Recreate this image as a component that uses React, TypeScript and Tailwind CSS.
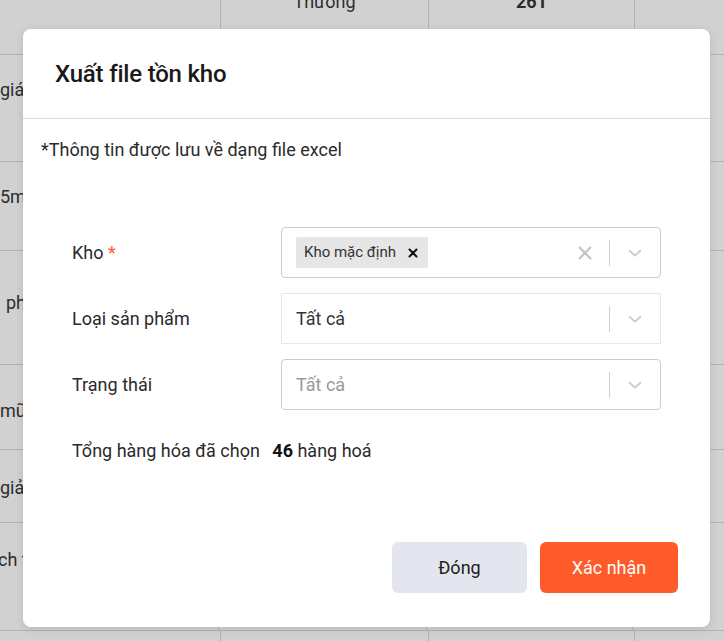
const rows = [
  { h: "h-[55px]", pt: "", a: "", b: "Thường", c: "261" },
  { h: "h-[107px]", pt: "pt-[23px]", a: "giá bán lẻ", b: "", c: "" },
  { h: "h-[89px]", pt: "pt-[23px]", a: "5ml", b: "", c: "" },
  { h: "h-[114px]", pt: "pt-[40px] pl-[6px]", a: "phẩm", b: "", c: "" },
  { h: "h-[85px]", pt: "pt-[34px]", a: "mũ bảo", b: "", c: "" },
  { h: "h-[73px]", pt: "pt-[26px]", a: "giảm giá", b: "", c: "" },
  { h: "h-[108px]", pt: "pt-[25px] -ml-[2px]", a: "ch tiết", b: "", c: "" },
  { h: "h-[60px]", pt: "", a: "", b: "", c: "" },
];

function Chevron() {
  return (
    <svg width="18" height="18" viewBox="0 0 20 20" className="text-[#cccccc]">
      <path
        d="M4 7.5 10 13 16 7.5"
        fill="none"
        stroke="currentColor"
        strokeWidth="2"
        strokeLinecap="round"
        strokeLinejoin="round"
      />
    </svg>
  );
}

function SelectBox({
  children,
  clear,
  className,
}: {
  children: React.ReactNode;
  clear?: boolean;
  className: string;
}) {
  return (
    <div className={`flex h-[51px] w-[380px] items-center bg-white ${className}`}>
      <div className="flex flex-1 items-center pl-[14px]">{children}</div>
      {clear && (
        <svg width="18" height="18" viewBox="0 0 20 20" className="mr-[15px] text-[#c4c4c4]">
          <path d="M4 4 16 16M16 4 4 16" stroke="currentColor" strokeWidth="2.4" strokeLinecap="round" />
        </svg>
      )}
      <div className="h-[26px] w-px bg-[#d0d0d0]" />
      <div className="flex w-[50px] items-center justify-center">
        <Chevron />
      </div>
    </div>
  );
}

export default function App() {
  return (
    <div
      className="relative h-[641px] w-[724px] overflow-hidden bg-[#d1d1d1] text-[#2c2c2c]"
      style={{ fontFamily: "Roboto, 'Noto Sans', sans-serif" }}
    >
      {/* background table under the overlay */}
      <div className="flex flex-col">
        {rows.map((r, i) => (
          <div key={i} className={`flex ${r.h} border-b border-[#b3b3b6] text-[18px] leading-[24px]`}>
            <div className={`w-[220px] whitespace-nowrap ${r.pt}`}>{r.a}</div>
            <div className="flex w-[208px] items-start justify-center border-l border-[#b3b3b6]">
              {r.b && <span className="-mt-[10px]">{r.b}</span>}
            </div>
            <div className="flex w-[206px] items-start justify-center border-l border-[#b3b3b6]">
              {r.c && <span className="-mt-[10px] font-bold">{r.c}</span>}
            </div>
            <div className="flex-1 border-l border-[#b3b3b6]" />
          </div>
        ))}
      </div>

      {/* modal */}
      <div className="absolute left-[23px] top-[29px] flex h-[598px] w-[687px] flex-col rounded-[8px] bg-white shadow-[0_2px_8px_rgba(0,0,0,0.12)]">
        <div className="flex h-[90px] items-center border-b border-[#dcdcdc] px-[32px]">
          <h2 className="text-[24px] font-medium tracking-[-0.2px] text-[#1a1a1a]">Xuất file tồn kho</h2>
        </div>

        <p className="mt-[19px] pl-[18px] text-[18px] leading-[24px] text-[#2a2a2a]">
          *Thông tin được lưu về dạng file excel
        </p>

        <div className="mt-[65px] flex flex-col gap-[15px] px-[49px] text-[18px] text-[#2a2a2a]">
          <div className="flex items-center">
            <div className="w-[209px]">
              Kho <span className="text-[#ff5a2a]">*</span>
            </div>
            <SelectBox clear className="rounded-[4px] border border-[#cccccc]">
              <div className="flex h-[31px] items-center gap-[12px] rounded-[2px] bg-[#e6e6e6] pl-[8px] pr-[10px]">
                <span className="text-[15px] text-[#333333]">Kho mặc định</span>
                <svg width="10" height="10" viewBox="0 0 10 10">
                  <path d="M1.5 1.5 8.5 8.5M8.5 1.5 1.5 8.5" stroke="#111111" strokeWidth="2" strokeLinecap="round" />
                </svg>
              </div>
            </SelectBox>
          </div>

          <div className="flex items-center">
            <div className="w-[209px]">Loại sản phẩm</div>
            <SelectBox className="border border-[#e4e6f0]">
              <span className="text-[#333333]">Tất cả</span>
            </SelectBox>
          </div>

          <div className="flex items-center">
            <div className="w-[209px]">Trạng thái</div>
            <SelectBox className="rounded-[4px] border border-[#cccccc]">
              <span className="text-[#9a9a9a]">Tất cả</span>
            </SelectBox>
          </div>
        </div>

        <div className="mt-[29px] px-[49px] text-[18px] leading-[24px] text-[#2a2a2a]">
          Tổng hàng hóa đã chọn <span className="ml-[8px] font-bold text-[#111111]">46</span> hàng hoá
        </div>

        <div className="mt-auto flex justify-end gap-[13px] px-[32px] pb-[34px]">
          <button className="h-[51px] w-[135px] rounded-[6px] bg-[#e4e6ef] text-[18px] text-[#222222]">
            Đóng
          </button>
          <button className="h-[51px] w-[138px] rounded-[6px] bg-[#ff5a2a] text-[18px] text-white">
            Xác nhận
          </button>
        </div>
      </div>
    </div>
  );
}
